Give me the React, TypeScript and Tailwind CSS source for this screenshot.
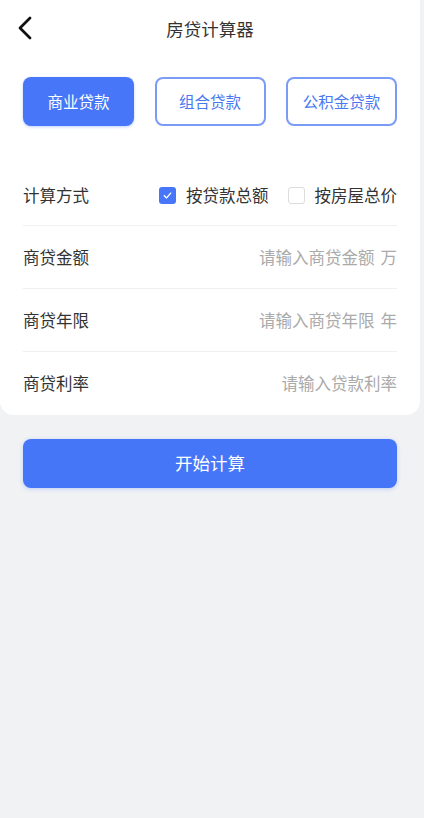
import React, { useState } from 'react';

const tabs = ['商业贷款', '组合贷款', '公积金贷款'];

const fields = [
  { label: '商贷金额', placeholder: '请输入商贷金额', unit: '万' },
  { label: '商贷年限', placeholder: '请输入商贷年限', unit: '年' },
  { label: '商贷利率', placeholder: '请输入贷款利率', unit: '' },
];

function Check({ on }: { on: boolean }) {
  return on ? (
    <span className="flex h-[17px] w-[17px] items-center justify-center rounded-[3px] bg-[#4777f8]">
      <svg width="11" height="11" viewBox="0 0 12 12" fill="none">
        <path d="M2.5 6.2 L5 8.6 L9.5 3.4" stroke="white" strokeWidth="1.5" strokeLinecap="round" strokeLinejoin="round" />
      </svg>
    </span>
  ) : (
    <span className="h-[17px] w-[17px] rounded-[3px] border border-[#dcdcdc] bg-white" />
  );
}

export default function App() {
  const [tab, setTab] = useState(0);
  const [mode, setMode] = useState(0);

  return (
    <div
      className="min-h-[818px] w-[424px] bg-[#f1f2f4]"
      style={{ fontFamily: '"Noto Sans CJK SC", "Noto Sans", sans-serif' }}
    >
      <div className="mr-[4px] rounded-b-[14px] bg-white px-[23px]">
        {/* Header */}
        <div className="relative flex h-[58px] items-center justify-center">
          <button className="absolute left-[-11px] top-[12px] p-1">
            <svg width="20" height="24" viewBox="0 0 20 24" fill="none">
              <path d="M14 2 L4 12 L14 22" stroke="#111" strokeWidth="2.8" strokeLinecap="round" strokeLinejoin="round" />
            </svg>
          </button>
          <h1 className="text-[17.5px] font-normal text-[#333]">房贷计算器</h1>
        </div>

        {/* Loan type tabs */}
        <div className="mt-[19px] flex justify-between">
          {tabs.map((t, i) => (
            <button
              key={t}
              onClick={() => setTab(i)}
              className={
                i === tab
                  ? 'flex h-[49px] w-[111px] items-center justify-center rounded-[8px] bg-[#4777f8] text-[15.5px] text-white shadow-[0_1px_3px_rgba(71,119,248,0.35)]'
                  : 'flex h-[49px] w-[111px] items-center justify-center rounded-[8px] border-2 border-[#7b9cf6] bg-white text-[15.5px] text-[#4a78f0]'
              }
            >
              {t}
            </button>
          ))}
        </div>

        {/* Form rows */}
        <div className="mt-[39px]">
          <div className="flex h-[61px] items-center justify-between border-b border-[#f0f0f0]">
            <span className="text-[16.5px] text-[#333]">计算方式</span>
            <div className="flex items-center">
              <button onClick={() => setMode(0)} className="flex items-center">
                <Check on={mode === 0} />
                <span className="ml-[10px] text-[16.5px] text-[#333]">按贷款总额</span>
              </button>
              <button onClick={() => setMode(1)} className="ml-[19px] flex items-center">
                <Check on={mode === 1} />
                <span className="ml-[10px] text-[16.5px] text-[#333]">按房屋总价</span>
              </button>
            </div>
          </div>

          {fields.map((f, i) => (
            <div
              key={f.label}
              className={
                i < fields.length - 1
                  ? 'flex h-[63px] items-center justify-between border-b border-[#f0f0f0]'
                  : 'flex h-[63px] items-center justify-between'
              }
            >
              <span className="text-[16.5px] text-[#333]">{f.label}</span>
              <div className="flex items-center text-[16.5px] text-[#aaa]">
                <input
                  placeholder={f.placeholder}
                  className="w-[170px] bg-transparent text-right outline-none placeholder:text-[#aaa]"
                />
                {f.unit && <span className="ml-[6px] text-[#aaa]">{f.unit}</span>}
              </div>
            </div>
          ))}
        </div>
      </div>

      <div className="mr-[4px] px-[23px] pt-[24px]">
        <button className="flex h-[49px] w-full items-center justify-center rounded-[8px] bg-[#4676f8] text-[17.5px] text-white shadow-[0_1px_4px_rgba(70,118,248,0.3)]">
          开始计算
        </button>
      </div>
    </div>
  );
}
